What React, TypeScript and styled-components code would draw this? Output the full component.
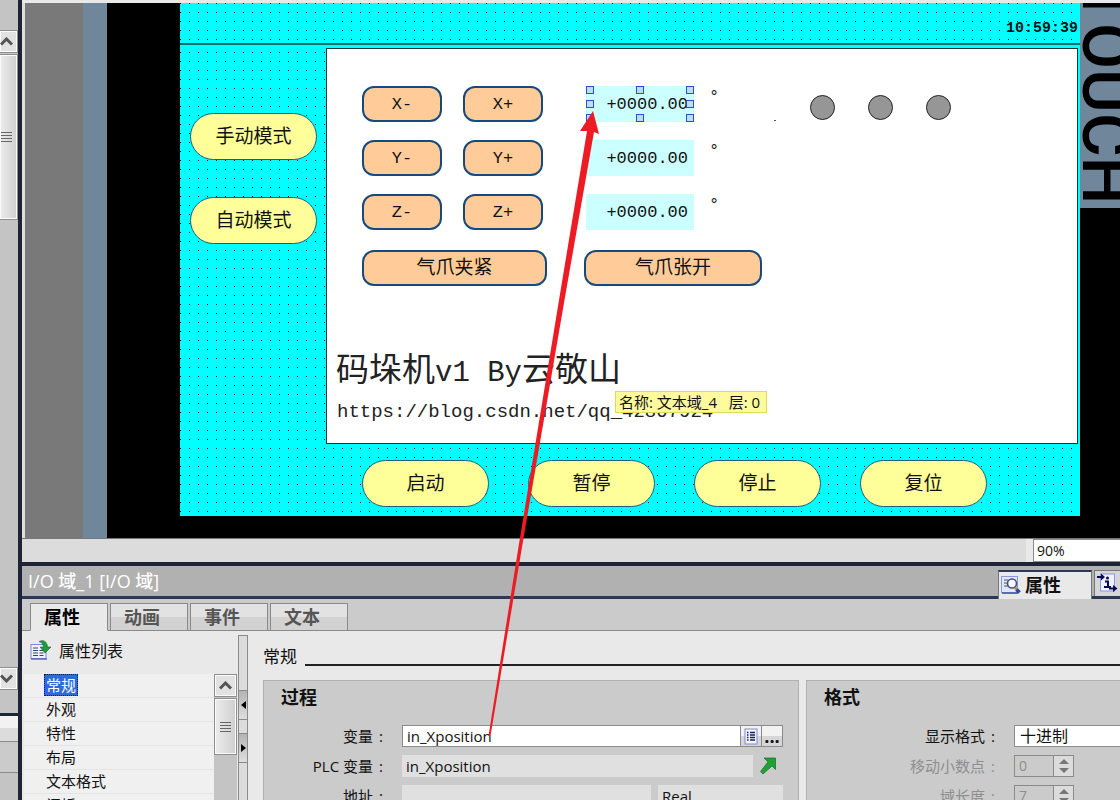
import React from "react";
import styled, { createGlobalStyle, css } from "styled-components";

const uiFont = `"Open Sans", "Noto Sans CJK SC", sans-serif`;
const screenFont = `"Liberation Mono", "Noto Sans CJK SC", monospace`;
const navy = "#1c2436";

const GlobalStyle = createGlobalStyle`
  * { box-sizing: border-box; }
  body { margin: 0; background: #e9e9e9; font: 14px/20px ${uiFont}; color: #111; }
  button, input, select { font: inherit; color: inherit; margin: 0; padding: 0; border-radius: 0; }
  h1, h2, h3, p, ul { margin: 0; padding: 0; }
`;

/* ---------- application frame ---------- */

const Workspace = styled.div`
  position: relative;
  display: flex;
  height: 100vh;
  overflow: hidden;
`;

const Rail = styled.aside`
  display: flex;
  flex-direction: column;
  flex: none;
  width: 18px;
  background: #c4c4c4;
`;

const RailTrack = styled.div`
  display: flex;
  flex-direction: column;
  height: 713px;
  padding: 30px 0 23px;
`;

const RailFooter = styled.div`
  flex: 1;
  border-top: 3px solid ${navy};
`;

const RailStrip = styled.div<{ $plain?: boolean }>`
  height: ${(p) => (p.$plain ? 31 : 26)}px;
  border-bottom: 1px solid #8c8c8c;
  background: ${(p) => (p.$plain ? "#cbcbcb" : "linear-gradient(#f2f2f2 50%, #dcdcdc 50%)")};
`;

const ScrollButton = styled.button<{ $flush?: boolean }>`
  display: flex;
  align-items: center;
  justify-content: center;
  flex: none;
  width: 100%;
  height: 23px;
  padding-right: ${(p) => (p.$flush ? 4 : 0)}px;
  border: 1px solid #8f8f8f;
  border-left-width: ${(p) => (p.$flush ? 0 : 1)}px;
  box-shadow: inset 0 0 0 1px #fafafa;
  background: #e2e2e2;
`;

const ScrollThumb = styled.div<{ $length: number; $flush?: boolean }>`
  display: flex;
  align-items: center;
  justify-content: center;
  flex: none;
  height: ${(p) => p.$length}px;
  margin-top: 1px;
  padding-right: ${(p) => (p.$flush ? 4 : 0)}px;
  border: 1px solid #8f8f8f;
  border-left-width: ${(p) => (p.$flush ? 0 : 1)}px;
  box-shadow: inset 0 0 0 1px #fafafa;
  background: linear-gradient(90deg, #ececec, #cfcfcf);
`;

const Grow = styled.div`
  flex: 1;
`;

const Main = styled.main`
  display: flex;
  flex-direction: column;
  flex: 1;
  min-width: 0;
  border-left: 4px solid ${navy};
`;

/* ---------- device canvas ---------- */

const Stage = styled.section`
  display: flex;
  flex: none;
  height: 539px;
  padding-left: 3px;
  border-top: 3px solid #e9e9e9;
  border-bottom: 1px solid #777;
  background: #000;
  box-shadow: inset 3px 0 #dedede;
`;

const Bezel = styled.div<{ $width: number; $color: string }>`
  flex: none;
  width: ${(p) => p.$width}px;
  background: ${(p) => p.$color};
`;

const dots = css`
  background:
    linear-gradient(90deg, transparent 1px, #00ffff 1px) 0 0 / 9px 9px,
    linear-gradient(transparent 1px, #00ffff 1px) 0 0 / 9px 9px,
    #000;
`;

const Screen = styled.div`
  flex: 1;
  min-width: 0;
  height: 513px;
  background: #00ffff;
  font-family: ${screenFont};
`;

const ScreenHeader = styled.header`
  display: flex;
  justify-content: flex-end;
  align-items: center;
  height: 42px;
  padding: 11px 2px 0 0;
  border-bottom: 2px solid #0a6d6d;
  ${dots}
`;

const Clock = styled.time`
  font-size: 15px;
  font-weight: bold;
  line-height: 20px;
`;

const ScreenBody = styled.div`
  display: grid;
  grid-template-columns: 146px 1fr;
  grid-template-rows: 396px 1fr;
  height: 471px;
  padding: 3px 2px 0 0;
  ${dots}
  background-position: 0 7px;
`;

const ModeColumn = styled.nav`
  display: flex;
  flex-direction: column;
  gap: 37px;
  padding: 65px 0 0 10px;
`;

const PillButton = styled.button`
  width: 127px;
  height: 47px;
  padding-top: 2px;
  border: 1px solid #1f5c80;
  border-radius: 24px;
  background: #ffff99;
  font-size: 19px;
  line-height: 24px;
`;

const CommandRow = styled.nav`
  grid-column: 2;
  display: flex;
  gap: 39px;
  padding: 16px 0 0 36px;
`;

const Board = styled.section`
  display: flex;
  flex-direction: column;
  border: 1px solid #143c3c;
  background: #fff;
  padding: 37px 0 0 35px;
`;

const BoardTop = styled.div`
  display: flex;
  align-items: flex-start;
`;

const Axes = styled.div`
  display: flex;
  flex-direction: column;
  gap: 18px;
`;

const AxisRow = styled.div`
  display: flex;
  align-items: flex-start;
`;

const JogPair = styled.div`
  display: flex;
  gap: 21px;
  margin-right: 43px;
`;

const JogButton = styled.button<{ $width?: number }>`
  width: ${(p) => p.$width ?? 80}px;
  height: 36px;
  padding-top: 2px;
  border: 2px solid #174a7c;
  border-radius: 12px;
  background: #ffcc99;
  font-size: ${(p) => (p.$width ? 19 : 17)}px;
  line-height: 24px;
`;

const GripRow = styled.div`
  display: flex;
  gap: 37px;
  margin-top: 20px;
`;

const ValueField = styled.div`
  position: relative;
  width: 108px;
  height: 36px;
  background: #ccffff;
`;

const ValueInput = styled.input`
  width: 100%;
  height: 36px;
  padding-right: 6px;
  border: 0;
  background: transparent;
  text-align: right;
  font-size: 17px;
`;

const Handles = styled.div`
  position: absolute;
  inset: 0;
  display: grid;
  grid-template-columns: repeat(3, 8px);
  grid-template-rows: repeat(3, 8px);
  justify-content: space-between;
  align-content: space-between;
`;

const Handle = styled.span<{ $hidden?: boolean }>`
  border: 1px solid #2450c8;
  background: #bfdcfa;
  visibility: ${(p) => (p.$hidden ? "hidden" : "visible")};
`;

const Degree = styled.span`
  margin-left: 15px;
  font-size: 17px;
  line-height: 22px;
`;

const Speck = styled.i`
  width: 2px;
  height: 1px;
  margin: 34px 34px 0 55px;
  background: #555;
`;

const Lamps = styled.div`
  display: flex;
  gap: 33px;
  padding-top: 9px;
`;

const Lamp = styled.span`
  width: 25px;
  height: 25px;
  border: 1px solid #222;
  border-radius: 50%;
  background: #969696;
`;

const BoardTitle = styled.h1`
  margin: 63px 0 0 -26px;
  color: #222;
  font-size: 33px;
  font-weight: 400;
  line-height: 48px;
  white-space: nowrap;
`;

const Latin = styled.span`
  font-size: 29px;
`;

const BlogLink = styled.a`
  margin: 2px 0 0 -25px;
  color: #222;
  font-size: 19px;
  line-height: 24px;
  text-decoration: none;
  white-space: nowrap;
`;

const BrandColumn = styled.div`
  flex: none;
  width: 40px;
  overflow: hidden;
`;

const Brand = styled.div`
  display: flex;
  justify-content: flex-end;
  width: 52px;
  height: 205px;
  padding-bottom: 4px;
  background: #70869a;
  color: #000;
  writing-mode: vertical-rl;
  font: 500 67px/52px Roboto, sans-serif;
  white-space: nowrap;
`;

const Tooltip = styled.div`
  position: absolute;
  left: 615px;
  top: 391px;
  height: 22px;
  padding: 0 6px 0 3px;
  border: 1px solid #e2da50;
  background: #fffa9e;
  font-size: 15px;
  line-height: 20px;
  white-space: pre;
`;

const Annotation = styled.svg`
  position: absolute;
  left: 0;
  top: 0;
  pointer-events: none;
`;

/* ---------- zoom bar and title bar ---------- */

const ZoomBar = styled.div`
  display: flex;
  flex: none;
  height: 23px;
  background: #dcdcdc;
`;

const ZoomBox = styled.div`
  display: flex;
  width: 94px;
  padding-left: 7px;
  background: #e9e9e9;
`;

const ZoomSelect = styled.select`
  appearance: none;
  width: 100%;
  padding: 0 3px;
  border: 1px solid #8c8c8c;
  border-right: 0;
  background: #fff;
`;

const TitleBar = styled.div`
  display: flex;
  align-items: flex-end;
  flex: none;
  height: 37px;
  padding-left: 6px;
  border-top: 4px solid ${navy};
  box-shadow: inset 0 -3px #2d3856;
  background: #b1b1b1;
`;

const ObjectName = styled.h2`
  flex: 1;
  color: #fff;
  font-size: 18px;
  font-weight: 500;
  line-height: 24px;
  padding-bottom: 6px;
`;

const ViewTab = styled.button<{ $active?: boolean }>`
  display: flex;
  align-items: center;
  gap: 4px;
  height: ${(p) => (p.$active ? 29 : 26)}px;
  width: ${(p) => (p.$active ? 94 : 26)}px;
  margin: ${(p) => (p.$active ? "0 2px 0 0" : "0 0 3px")};
  padding: 0 0 2px 2px;
  border: 1px solid #777;
  border-width: ${(p) => (p.$active ? "2px 1px 0" : "1px 0 0 1px")};
  border-top-color: ${(p) => (p.$active ? "#2d3856" : "#777")};
  background: ${(p) => (p.$active ? "#e9e9e9" : "#d6d6d6")};
  font-size: 18px;
  font-weight: bold;
  overflow: hidden;

  svg { flex: none; }
`;

/* ---------- inspector ---------- */

const TabStrip = styled.div`
  display: flex;
  align-items: flex-end;
  gap: 2px;
  flex: none;
  height: 32px;
  padding-left: 8px;
  background: #cbcbcb;
  box-shadow: inset 0 -1px #8a8a8a;
`;

const Tab = styled.button<{ $active?: boolean }>`
  width: 78px;
  height: 28px;
  padding-right: 14px;
  border: 1px solid #8a8a8a;
  border-bottom-color: ${(p) => (p.$active ? "#e9e9e9" : "#8a8a8a")};
  background: ${(p) => (p.$active ? "#e9e9e9" : "linear-gradient(#e2e2e2 50%, #d2d2d2 50%)")};
  color: ${(p) => (p.$active ? "#000" : "#555")};
  font-size: 18px;
  font-weight: bold;
  line-height: 24px;
`;

const Inspector = styled.section`
  display: flex;
  flex: 1;
  min-height: 0;
  background: #e9e9e9;
`;

const ListPane = styled.div`
  display: flex;
  flex-direction: column;
  flex: none;
  width: 216px;
`;

const ListHeader = styled.div`
  display: flex;
  align-items: center;
  gap: 8px;
  flex: none;
  height: 43px;
  padding: 0 0 4px 8px;
  font-size: 16px;
`;

const ListArea = styled.div`
  display: flex;
  flex: 1;
  min-height: 0;
  padding: 0 1px 0 2px;
`;

const PropertyList = styled.ul`
  flex: 1;
  list-style: none;
  background: #f0f0f0;
`;

const ListItem = styled.li`
  height: 24px;
  padding-left: 20px;
  border-bottom: 1px solid #e4e4e4;
`;

const ListChoice = styled.button<{ $selected?: boolean }>`
  display: flex;
  height: 22px;
  padding: 0 1px;
  border: 1px dotted ${(p) => (p.$selected ? "#123" : "transparent")};
  background: ${(p) => (p.$selected ? "#2f6bd8" : "transparent")};
  color: ${(p) => (p.$selected ? "#fff" : "#111")};
  font-size: 15px;
  line-height: 20px;
`;

const ListScroll = styled.div`
  display: flex;
  flex-direction: column;
  width: 23px;
  background: #c4c4c4;
`;

const Splitter = styled.div`
  display: flex;
  flex-direction: column;
  gap: 13px;
  flex: none;
  width: 10px;
  margin-top: 4px;
  padding-top: 54px;
  border: 1px solid #8a8a8a;
  border-bottom: 0;
  background: #dcdcdc;
`;

const SplitButton = styled.button`
  display: flex;
  align-items: center;
  justify-content: center;
  height: 30px;
  border: 0;
  border-top: 1px solid #8a8a8a;
  border-bottom: 1px solid #8a8a8a;
  background: linear-gradient(#b4b4b4, #dedede);
`;

const Detail = styled.div`
  flex: 1;
  min-width: 0;
  padding: 14px 0 0 15px;
  overflow: hidden;
`;

const SectionTitle = styled.h2`
  display: flex;
  align-items: center;
  gap: 8px;
  font-size: 17px;
  font-weight: 400;
  line-height: 24px;
  height: 24px;

  &::after {
    content: "";
    flex: 1;
    height: 2px;
    margin-top: 15px;
    background: #222;
  }
`;

const Groups = styled.div`
  display: grid;
  grid-template-columns: 536px minmax(320px, 1fr);
  gap: 7px;
  margin-top: 11px;
`;

const Group = styled.section<{ $bleed?: boolean }>`
  height: 160px;
  padding: 4px ${(p) => (p.$bleed ? 0 : 15)}px 0 17px;
  border: 1px solid #b0b0b0;
  background: #cbcbcb;
`;

const GroupTitle = styled.h3`
  font-size: 18px;
  line-height: 24px;
  margin-bottom: 16px;
`;

const FormRow = styled.div<{ $label: number; $muted?: boolean }>`
  display: grid;
  grid-template-columns: ${(p) => p.$label}px 1fr;
  gap: 19px;
  align-items: center;
  height: 22px;
  margin-bottom: 8px;
  color: ${(p) => (p.$muted ? "#8e8e8e" : "#111")};
`;

const FieldLabel = styled.label`
  display: flex;
  justify-content: flex-end;
  gap: 6px;
  font-size: 15px;
  white-space: nowrap;
`;

const FieldLine = styled.div<{ $framed?: boolean }>`
  display: flex;
  align-items: center;
  gap: ${(p) => (p.$framed ? 0 : 7)}px;
  height: 22px;
`;

const TextInput = styled.input<{ $readonly?: boolean }>`
  flex: 1;
  min-width: 0;
  height: 22px;
  padding: 0 4px;
  border: ${(p) => (p.$readonly ? "0" : "1px solid #8a8a8a")};
  background: ${(p) => (p.$readonly ? "#e0e0e0" : "#fff")};
  font-size: 15px;
`;

const TypeInput = styled(TextInput)`
  flex: 0 0 125px;
`;

const FieldButton = styled.button`
  display: flex;
  align-items: center;
  justify-content: center;
  width: 22px;
  height: 22px;
  margin-left: -1px;
  border: 1px solid #8a8a8a;
  background: linear-gradient(#f2f2f2 50%, #d6d6d6 50%);
  font-size: 18px;
  font-weight: bold;
`;

const LinkButton = styled.button`
  display: flex;
  width: 23px;
  border: 0;
  background: transparent;
`;

const FormatSelect = styled.select`
  appearance: none;
  width: 100%;
  height: 22px;
  padding: 0 5px;
  border: 1px solid #8a8a8a;
  background: #fff;
  font-size: 16px;
`;

const Spinner = styled.div`
  display: flex;
  width: 60px;
  height: 22px;
  border: 1px solid #8a8a8a;

  input {
    width: 38px;
    padding: 0 4px;
    border: 0;
    background: transparent;
  }
`;

const SpinnerArrows = styled.span`
  display: flex;
  align-items: center;
  justify-content: center;
  flex: 1;
  border-left: 1px solid #8a8a8a;
  background: #dcdcdc;
`;

/* ---------- drawings ---------- */

const Chevron = ({ down }: { down?: boolean }) => (
  <svg width="13" height="9" viewBox="0 0 13 9" fill="none" stroke="#555" strokeWidth="3">
    <path d={down ? "M1 1.5 6.5 7 12 1.5" : "M1 7.5 6.5 2 12 7.5"} />
  </svg>
);

const Grip = () => (
  <svg width="11" height="10" viewBox="0 0 11 10" stroke="#666">
    <path d="M0 .5h11M0 3.5h11M0 6.5h11M0 9.5h11" />
  </svg>
);

const ListIcon = () => (
  <svg width="21" height="21" viewBox="0 0 21 21">
    <rect x="1" y="4.500" width="15" height="14" fill="#eef2ff" stroke="#7d88d8" />
    <path d="M1 19h16" stroke="#5c68c4" strokeWidth="1.500" />
    <path d="M3 8h5M3 10.500h5M3 13h5M3 15.500h5M9.500 10.500h4M9.500 13h4M9.500 15.500h4" stroke="#39406e" />
    <path d="M9 1.500C13-.5 17 1 17.500 7H21l-6 6-5-6h3.500C13 4 12 2.500 9 1.500Z" fill="#219a38" stroke="#0e6a22" strokeWidth=".6" />
  </svg>
);

const InspectIcon = () => (
  <svg width="20" height="20" viewBox="0 0 20 20">
    <rect x=".5" y="1.500" width="16" height="16" fill="#dfe6ff" stroke="#8b98e0" />
    <path d="M1 18h16" stroke="#5c68c4" strokeWidth="2" />
    <path d="M3 5h4M3 8h3M3 11h4" stroke="#555" />
    <circle cx="11" cy="8.500" r="4.500" fill="#f5f8ff" stroke="#4b4f78" strokeWidth="1.600" />
    <path d="m14 12.500 2 2" stroke="#c09030" strokeWidth="3" />
    <path d="m15.500 14.500 3 3" stroke="#1f4f9a" strokeWidth="3.500" />
  </svg>
);

const InfoIcon = () => (
  <svg width="21" height="20" viewBox="0 0 21 20">
    <rect x="3.500" y="1" width="14" height="17" fill="#eef1ff" stroke="#8b98e0" />
    <path d="M0 4h6M12 15.500h7" stroke="#0a0a50" strokeWidth="2" />
    <path d="m4 .5 4 3.500-4 3.500ZM16 12l4.500 3.500L16 19Z" fill="#0a0a50" />
    <path d="M8 8.500h3V14M7 14h7" stroke="#0a0a50" strokeWidth="2" fill="none" />
    <circle cx="10.500" cy="5" r="1.500" fill="#0a0a50" />
  </svg>
);

const SheetIcon = () => (
  <svg width="14" height="17" viewBox="0 0 14 17">
    <rect x="1" y="1" width="12" height="15" fill="#f2f5ff" stroke="#7d88d8" />
    <path d="M3 4.500h1.500M3 7h1.500M3 9.500h1.500M3 12h1.500M6 4.500h5M6 7h5M6 9.500h5M6 12h5" stroke="#20204c" strokeWidth="1.400" />
  </svg>
);

const GoIcon = () => (
  <svg width="16" height="18" viewBox="0 0 16 18">
    <path d="M4 1h11.500v11.500l-3.500-3.500L3 17l-2.500-2.500L8 5Z" fill="#22a032" stroke="#0f6e2c" strokeWidth=".7" />
  </svg>
);

const Triangle = ({ right }: { right?: boolean }) => (
  <svg width="5" height="8" viewBox="0 0 5 8">
    <path d={right ? "M0 0 5 4 0 8Z" : "M5 0 0 4 5 8Z"} />
  </svg>
);

const UpDown = () => (
  <svg width="12" height="16" viewBox="0 0 12 16" fill="#777">
    <path d="M1 6 6 1l5 5ZM1 10h10l-5 5Z" />
  </svg>
);

/* ---------- data ---------- */

const axes = ["X", "Y", "Z"];
const commands = ["启动", "暂停", "停止", "复位"];
const tabs = ["属性", "动画", "事件", "文本"];
const properties = ["常规", "外观", "特性", "布局", "文本格式", "闪烁"];

const NumberField = ({ id, label, value }: { id: string; label: string; value: string }) => (
  <FormRow $label={171} $muted>
    <FieldLabel htmlFor={id}>{label}<span>:</span></FieldLabel>
    <Spinner>
      <input id={id} defaultValue={value} disabled />
      <SpinnerArrows><UpDown /></SpinnerArrows>
    </Spinner>
  </FormRow>
);

export default function App() {
  return (
    <Workspace>
      <GlobalStyle />
      <Rail>
        <RailTrack>
          <ScrollButton $flush aria-label="向上滚动"><Chevron /></ScrollButton>
          <ScrollThumb $flush $length={166}><Grip /></ScrollThumb>
          <Grow />
          <ScrollButton $flush aria-label="向下滚动"><Chevron down /></ScrollButton>
        </RailTrack>
        <RailFooter>
          <RailStrip />
          <RailStrip $plain />
        </RailFooter>
      </Rail>

      <Main>
        <Stage>
          <Bezel $width={58} $color="#797979" />
          <Bezel $width={24} $color="#70869a" />
          <Bezel $width={73} $color="#000" />
          <Screen>
            <ScreenHeader><Clock>10:59:39</Clock></ScreenHeader>
            <ScreenBody>
              <ModeColumn>
                <PillButton>手动模式</PillButton>
                <PillButton>自动模式</PillButton>
              </ModeColumn>
              <Board>
                <BoardTop>
                  <Axes>
                    {axes.map((axis, i) => (
                      <AxisRow key={axis}>
                        <JogPair>
                          <JogButton>{axis}-</JogButton>
                          <JogButton>{axis}+</JogButton>
                        </JogPair>
                        <ValueField>
                          <ValueInput aria-label={`${axis} 位置`} defaultValue="+0000.00" />
                          {i === 0 && (
                            <Handles>
                              {Array.from({ length: 9 }, (_, n) => <Handle key={n} $hidden={n === 4} />)}
                            </Handles>
                          )}
                        </ValueField>
                        <Degree>°</Degree>
                      </AxisRow>
                    ))}
                  </Axes>
                  <Speck />
                  <Lamps><Lamp /><Lamp /><Lamp /></Lamps>
                </BoardTop>
                <GripRow>
                  <JogButton $width={185}>气爪夹紧</JogButton>
                  <JogButton $width={178}>气爪张开</JogButton>
                </GripRow>
                <BoardTitle>码垛机<Latin>v1 By</Latin>云敬山</BoardTitle>
                <BlogLink href="https://blog.csdn.net/qq_42807924">https://blog.csdn.net/qq_42807924</BlogLink>
              </Board>
              <CommandRow>
                {commands.map((c) => <PillButton key={c}>{c}</PillButton>)}
              </CommandRow>
            </ScreenBody>
          </Screen>
          <BrandColumn><Brand>TOUCH</Brand></BrandColumn>
        </Stage>

        <ZoomBar>
          <Grow />
          <ZoomBox>
            <ZoomSelect aria-label="缩放"><option>90%</option></ZoomSelect>
          </ZoomBox>
        </ZoomBar>

        <TitleBar>
          <ObjectName>I/O 域_1 [I/O 域]</ObjectName>
          <ViewTab $active><InspectIcon />属性</ViewTab>
          <ViewTab aria-label="信息"><InfoIcon /></ViewTab>
        </TitleBar>
        <TabStrip>
          {tabs.map((t, i) => <Tab key={t} $active={i === 0}>{t}</Tab>)}
        </TabStrip>

        <Inspector>
          <ListPane>
            <ListHeader><ListIcon />属性列表</ListHeader>
            <ListArea>
              <PropertyList>
                {properties.map((p, i) => (
                  <ListItem key={p}><ListChoice $selected={i === 0}>{p}</ListChoice></ListItem>
                ))}
              </PropertyList>
              <ListScroll>
                <ScrollButton aria-label="向上滚动"><Chevron /></ScrollButton>
                <ScrollThumb $length={57}><Grip /></ScrollThumb>
                <Grow />
              </ListScroll>
            </ListArea>
          </ListPane>
          <Splitter>
            <SplitButton aria-label="折叠"><Triangle /></SplitButton>
            <SplitButton aria-label="展开"><Triangle right /></SplitButton>
          </Splitter>
          <Detail>
            <SectionTitle>常规</SectionTitle>
            <Groups>
              <Group>
                <GroupTitle>过程</GroupTitle>
                <FormRow $label={102}>
                  <FieldLabel htmlFor="tag">变量<span>:</span></FieldLabel>
                  <FieldLine $framed>
                    <TextInput id="tag" defaultValue="in_Xposition" />
                    <FieldButton aria-label="变量列表"><SheetIcon /></FieldButton>
                    <FieldButton>...</FieldButton>
                  </FieldLine>
                </FormRow>
                <FormRow $label={102}>
                  <FieldLabel htmlFor="plc">PLC 变量<span>:</span></FieldLabel>
                  <FieldLine>
                    <TextInput id="plc" $readonly readOnly defaultValue="in_Xposition" />
                    <LinkButton aria-label="转到变量"><GoIcon /></LinkButton>
                  </FieldLine>
                </FormRow>
                <FormRow $label={102}>
                  <FieldLabel htmlFor="address">地址<span>:</span></FieldLabel>
                  <FieldLine>
                    <TextInput id="address" $readonly readOnly />
                    <TypeInput aria-label="数据类型" $readonly readOnly defaultValue="Real" />
                  </FieldLine>
                </FormRow>
              </Group>
              <Group $bleed>
                <GroupTitle>格式</GroupTitle>
                <FormRow $label={171}>
                  <FieldLabel htmlFor="format">显示格式<span>:</span></FieldLabel>
                  <FormatSelect id="format"><option>十进制</option></FormatSelect>
                </FormRow>
                <NumberField id="decimals" label="移动小数点" value="0" />
                <NumberField id="length" label="域长度" value="7" />
              </Group>
            </Groups>
          </Detail>
        </Inspector>
      </Main>

      <Tooltip>名称: 文本域_4   层: 0</Tooltip>
      <Annotation width="700" height="760" viewBox="0 0 700 760" fill="#ed1c24">
        <path d="M593 111 599 134 594 132 564.500 300 521.500 550 490.500 736 488.500 736 518 550 559 300 587 131 580 131Z" />
      </Annotation>
    </Workspace>
  );
}
